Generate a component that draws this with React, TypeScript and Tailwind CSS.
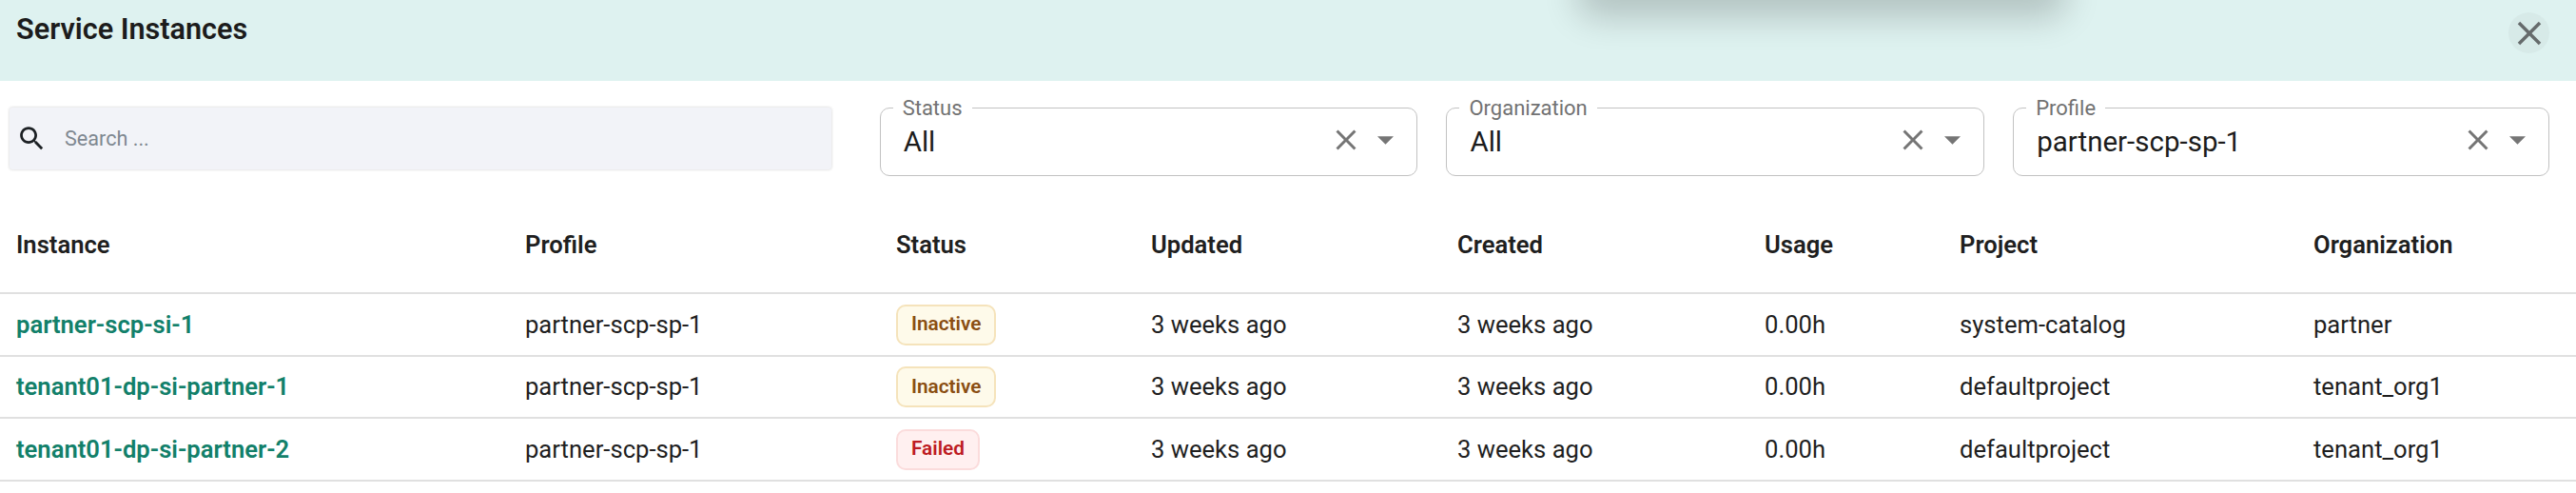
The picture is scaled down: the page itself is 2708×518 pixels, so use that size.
import React from "react";

const rows = [
  { name: "partner-scp-si-1", status: "Inactive", project: "system-catalog", org: "partner", h: "h-[66px]" },
  { name: "tenant01-dp-si-partner-1", status: "Inactive", project: "defaultproject", org: "tenant_org1", h: "h-[65px]" },
  { name: "tenant01-dp-si-partner-2", status: "Failed", project: "defaultproject", org: "tenant_org1", h: "h-[66px]" },
];

const columns = [
  { label: "Instance", width: "w-[552px]", pad: "pl-[17px]" },
  { label: "Profile", width: "w-[390px]", pad: "" },
  { label: "Status", width: "w-[268px]", pad: "" },
  { label: "Updated", width: "w-[322px]", pad: "" },
  { label: "Created", width: "w-[323px]", pad: "" },
  { label: "Usage", width: "w-[205px]", pad: "" },
  { label: "Project", width: "w-[372px]", pad: "" },
  { label: "Organization", width: "w-[276px]", pad: "" },
];

function Cross({ className }: { className: string }) {
  return (
    <svg viewBox="0 0 24 24" className={className} fill="currentColor">
      <path d="M19 6.41 17.59 5 12 10.59 6.41 5 5 6.41 10.59 12 5 17.59 6.41 19 12 13.41 17.59 19 19 17.59 13.41 12z" />
    </svg>
  );
}

function Field({ label, value, className }: { label: string; value: string; className: string }) {
  return (
    <div className={`relative h-[72px] rounded-[10px] border-[1.5px] border-[#c2c2c2] pl-[24px] pr-[24px] pt-[15px] flex items-start ${className}`}>
      <span className="absolute left-[13px] -top-[12px] bg-white px-[10px] text-[22px] leading-[24px] text-[#727272]">{label}</span>
      <span className="flex-1 text-[29.5px] leading-[40px] text-[#1c1c1c]">{value}</span>
      <Cross className="size-[36px] mr-[8px] text-[#757575]" />
      <svg viewBox="0 0 18 9" className="w-[17px] h-[9px] ml-[7px] mt-[14px] text-[#757575]" fill="currentColor">
        <path d="M0 0h18L9 9z" />
      </svg>
    </div>
  );
}

function Badge({ status }: { status: string }) {
  const failed = status === "Failed";
  return (
    <span
      className={`inline-flex h-[43px] items-center rounded-[10px] border-2 px-[14px] text-[20.8px] font-semibold ${
        failed ? "border-[#fbdcdc] bg-[#fff0f0] text-[#bd1b22]" : "border-[#f5e3bb] bg-[#fefaea] text-[#8a4e12]"
      }`}
    >
      {status}
    </span>
  );
}

export default function App() {
  return (
    <div className="relative h-[518px] w-[2708px] overflow-hidden bg-white font-['Roboto',sans-serif] text-[25.6px] text-[#1f1f1f]">
      <header className="relative h-[85px] overflow-hidden bg-[#def2f0] pl-[17px] pt-[13px] flex justify-between items-start pr-[28px]">
        <div className="absolute left-[1670px] -top-[30px] h-[30px] w-[490px] rounded-[8px] shadow-[0_6px_36px_12px_rgba(0,0,0,0.2)]" />
        <span className="text-[30.6px] leading-[36px] font-semibold text-[#1c1c1c]">Service Instances</span>
        <div className="size-[43px] rounded-full bg-[#d7eae8] flex items-center justify-center">
          <Cross className="size-[42px] text-[#666b6c]" />
        </div>
      </header>
      <div className="flex items-start pt-[28px] pl-[10px] pr-[28px]">
        <div className="w-[864px] h-[65px] rounded-[3px] bg-[#f2f3f8] shadow-[0_0_3px_rgba(0,0,0,0.2)] flex items-center pl-[7px] text-[21.6px] text-[#7f8891]">
          <svg viewBox="0 0 24 24" className="size-[33px] text-[#1c2024]" fill="currentColor">
            <path d="M15.5 14h-.79l-.28-.27C15.41 12.59 16 11.11 16 9.5 16 5.91 13.09 3 9.5 3S3 5.91 3 9.5 5.91 16 9.5 16c1.61 0 3.09-.59 4.23-1.57l.27.28v.79l5 4.99L20.49 19l-4.99-5zm-6 0C7.01 14 5 11.99 5 9.5S7.01 5 9.5 5 14 7.01 14 9.5 11.99 14 9.5 14z" />
          </svg>
          <span className="ml-[18px] mt-[2px]">Search ...</span>
        </div>
        <Field label="Status" value="All" className="ml-[51px] w-[566px]" />
        <Field label="Organization" value="All" className="ml-[30px] w-[566px]" />
        <Field label="Profile" value="partner-scp-sp-1" className="ml-[30px] w-[564px]" />
      </div>
      <table className="mt-[39px] w-[2708px] table-fixed text-left">
        <colgroup>
          {columns.map((c) => (
            <col key={c.label} className={c.width} />
          ))}
        </colgroup>
        <thead>
          <tr className="h-[84px] border-b-2 border-[#e0e0e0]">
            {columns.map((c) => (
              <th key={c.label} className={`pb-[17px] font-semibold ${c.pad}`}>
                {c.label}
              </th>
            ))}
          </tr>
        </thead>
        <tbody>
          {rows.map((r) => (
            <tr key={r.name} className={`${r.h} border-b-2 border-[#e0e0e0]`}>
              <td className="pl-[17px] font-semibold text-[#12806a]">{r.name}</td>
              <td>partner-scp-sp-1</td>
              <td>
                <Badge status={r.status} />
              </td>
              <td>3 weeks ago</td>
              <td>3 weeks ago</td>
              <td>0.00h</td>
              <td>{r.project}</td>
              <td>{r.org}</td>
            </tr>
          ))}
        </tbody>
      </table>
    </div>
  );
}
